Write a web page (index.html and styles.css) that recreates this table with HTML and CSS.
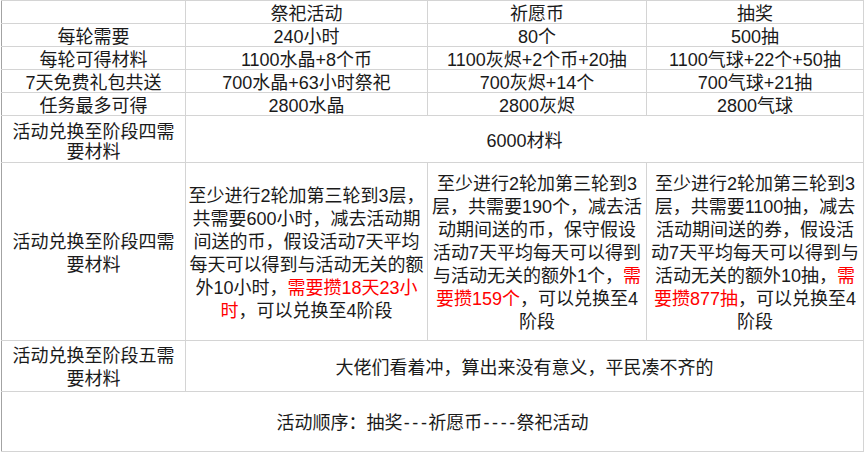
FILE: index.html
```html
<!DOCTYPE html>
<html lang="zh-CN">
<head>
<meta charset="utf-8">
<title>活动材料对比</title>
<link rel="stylesheet" href="styles.css">
</head>
<body>
<table class="sheet">
  <colgroup>
    <col class="c1">
    <col class="c2">
    <col class="c3">
    <col class="c4">
  </colgroup>
  <tr class="r-s">
    <td></td>
    <td>祭祀活动</td>
    <td>祈愿币</td>
    <td>抽奖</td>
  </tr>
  <tr class="r-s">
    <td>每轮需要</td>
    <td>240小时</td>
    <td>80个</td>
    <td>500抽</td>
  </tr>
  <tr class="r-s">
    <td>每轮可得材料</td>
    <td>1100水晶+8个币</td>
    <td>1100灰烬+2个币+20抽</td>
    <td>1100气球+22个+50抽</td>
  </tr>
  <tr class="r-s">
    <td>7天免费礼包共送</td>
    <td>700水晶+63小时祭祀</td>
    <td>700灰烬+14个</td>
    <td>700气球+21抽</td>
  </tr>
  <tr class="r-s">
    <td>任务最多可得</td>
    <td>2800水晶</td>
    <td>2800灰烬</td>
    <td>2800气球</td>
  </tr>
  <tr class="r-m">
    <td class="lbl-tight">活动兑换至阶段四需<br>要材料</td>
    <td class="mid" colspan="3">6000材料</td>
  </tr>
  <tr class="r-l">
    <td class="lbl">活动兑换至阶段四需<br>要材料</td>
    <td class="para">至少进行2轮加第三轮到3层，<br>共需要600小时，减去活动期<br>间送的币，假设活动7天平均<br>每天可以得到与活动无关的额<br>外10小时，<span class="hl">需要攒18天23小<br>时</span>，可以兑换至4阶段</td>
    <td class="para">至少进行2轮加第三轮到3<br>层，共需要190个，减去活<br>动期间送的币，保守假设<br>活动7天平均每天可以得到<br>与活动无关的额外1个，<span class="hl">需<br>要攒159个</span>，可以兑换至4<br>阶段</td>
    <td class="para">至少进行2轮加第三轮到3<br>层，共需要1100抽，减去<br>活动期间送的券，假设活<br>动7天平均每天可以得到与<br>活动无关的额外10抽，<span class="hl">需<br>要攒877抽</span>，可以兑换至4<br>阶段</td>
  </tr>
  <tr class="r-n">
    <td class="lbl-bottom">活动兑换至阶段五需<br>要材料</td>
    <td class="mid" colspan="3">大佬们看着冲，算出来没有意义，平民凑不齐的</td>
  </tr>
  <tr class="r-x">
    <td class="mid" colspan="4">活动顺序：抽奖<span class="dash">---</span>祈愿币<span class="dash">----</span>祭祀活动</td>
  </tr>
</table>
</body>
</html>
```

FILE: styles.css
```css
html, body {
  margin: 0;
  padding: 0;
  background: #ffffff;
}

body {
  font-family: "Liberation Sans", "Noto Sans CJK SC", sans-serif;
  font-size: 18px;
  color: #1a1a1a;
}

.sheet {
  border-collapse: collapse;
  table-layout: fixed;
  width: 863px;
  margin-left: 1px;
}

.c1 { width: 184px; }
.c2 { width: 242px; }
.c3 { width: 219px; }
.c4 { width: 217px; }

.sheet td {
  border: 1px solid #d4d4d4;
  padding: 5px 1px 0;
  text-align: center;
  vertical-align: middle;
  line-height: 17px;
  white-space: nowrap;
  overflow: hidden;
}

.sheet tr > td:first-child {
  border-left-color: #a3a3a3;
}

.r-s { height: 23px; }
.r-m { height: 47px; }
.r-l { height: 178px; }
.r-n { height: 51px; }
.r-x { height: 60px; }

.sheet td.lbl-tight {
  vertical-align: bottom;
  padding-top: 0;
  line-height: 20px;
}

.sheet td.lbl-bottom {
  vertical-align: bottom;
  padding-top: 0;
  line-height: 23px;
}

.sheet td.lbl,
.sheet td.para {
  padding-top: 4px;
  line-height: 23px;
}

.sheet td.mid {
  padding-top: 4px;
  line-height: 23px;
}

.hl {
  color: #ff0000;
}

.dash {
  letter-spacing: 2.6px;
  margin-left: 1.3px;
  margin-right: -1.3px;
}
```
